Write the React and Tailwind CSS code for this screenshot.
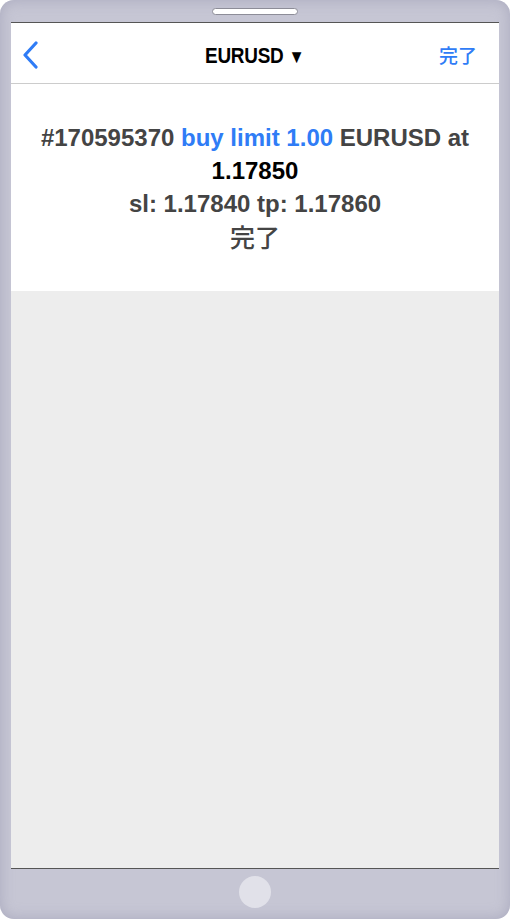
export default function App() {
  return (
    <div className="w-[510px] h-[919px] bg-white">
      <div className="w-full h-full rounded-[14px] bg-[#c6c6d4] shadow-[inset_0_0_14px_rgba(150,150,175,0.6)] flex flex-col">
        {/* top bezel with speaker */}
        <div className="h-[22px] flex items-start justify-center pt-[8px]">
          <div className="w-[86px] h-[7px] rounded-full bg-white border border-[#8d8d98]" />
        </div>

        {/* screen */}
        <div className="mx-[11px] flex-1 flex flex-col border-t border-b border-[#555555] bg-[#ededed]">
          <div className="h-[61px] bg-white border-b border-[#cccccc] flex items-center justify-between pl-[10px] pt-[4px] relative">
            <svg width="18" height="28" viewBox="0 0 18 28" className="text-[#2f7cf6]">
              <path d="M15 2 L4 14 L15 26" fill="none" stroke="currentColor" strokeWidth="3.2" strokeLinecap="round" strokeLinejoin="round" />
            </svg>
            <div className="absolute inset-x-0 top-[4px] bottom-0 flex items-center justify-center pointer-events-none">
              <span className="inline-block scale-x-[0.86] font-['Liberation_Sans',sans-serif] font-bold text-[22px] tracking-[-0.3px] text-black">
                EURUSD <span className="text-[19px]">▼</span>
              </span>
            </div>
            <span className="font-['Noto_Sans_CJK_JP',sans-serif] text-[19px] font-medium text-[#2f7cf6] pr-[22px]">
              完了
            </span>
          </div>

          <div className="bg-white h-[207px] pt-[37px] text-center font-['Liberation_Sans',sans-serif] font-bold text-[24px] leading-[33px] text-[#444444]">
            <div>
              #170595370 <span className="text-[#2f7cf6]">buy limit 1.00</span> EURUSD at
            </div>
            <div className="text-black">1.17850</div>
            <div>sl: 1.17840 tp: 1.17860</div>
            <div className="font-['Noto_Sans_CJK_JP',sans-serif] font-medium text-[25px]">完了</div>
          </div>
        </div>

        {/* bottom bezel with home button */}
        <div className="h-[50px] flex items-start justify-center pt-[7px]">
          <div className="w-[32px] h-[32px] rounded-full bg-[#e1e1e9]" />
        </div>
      </div>
    </div>
  );
}
